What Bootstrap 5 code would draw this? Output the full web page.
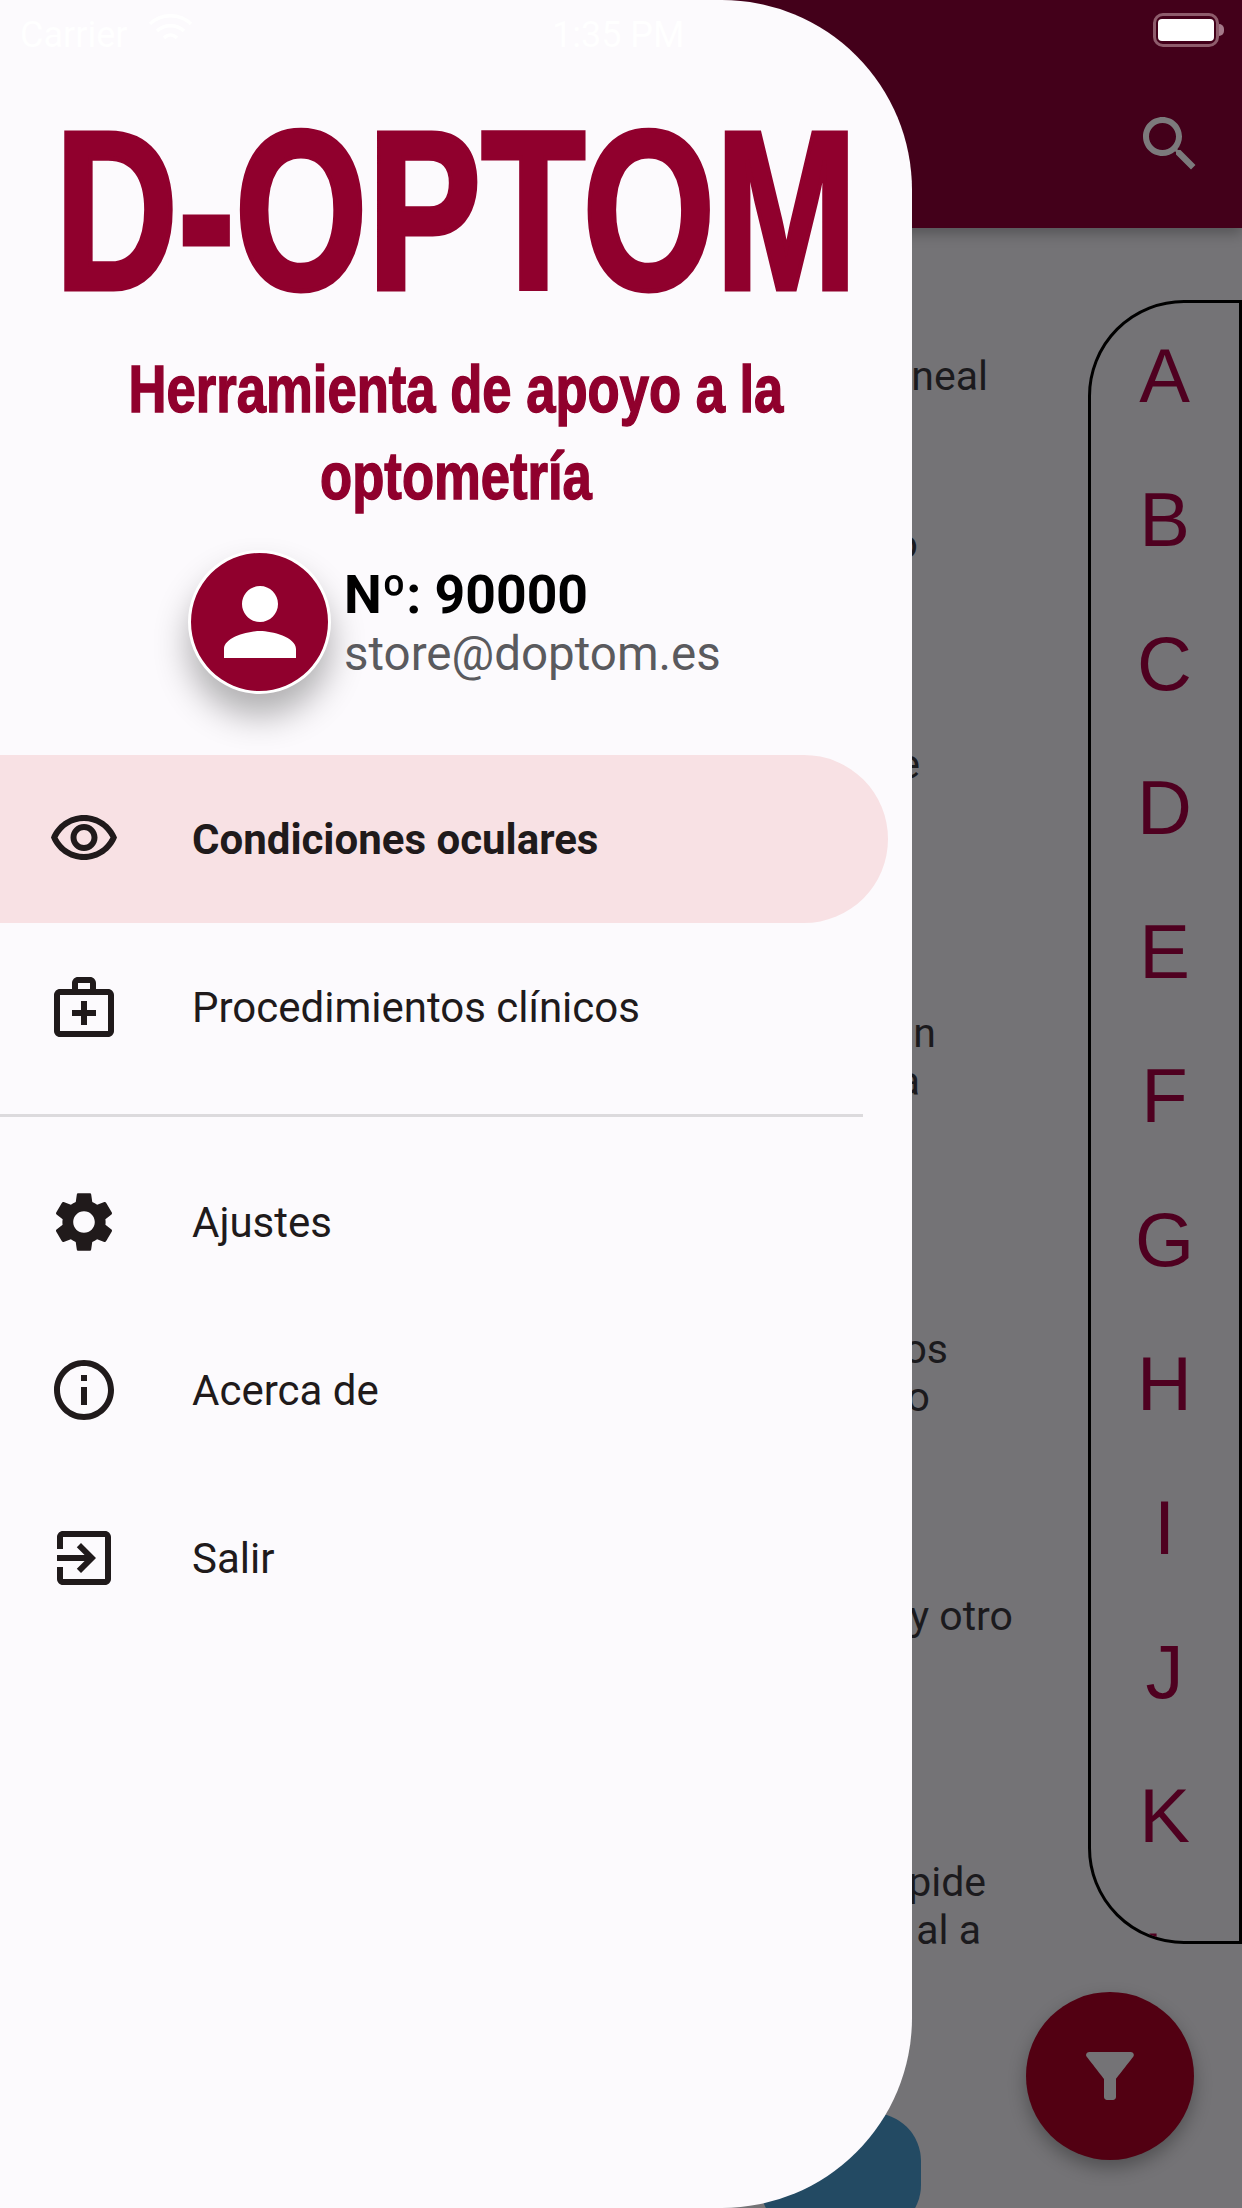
<!DOCTYPE html>
<html lang="es">
<head>
<meta charset="utf-8">
<title>D-OPTOM</title>
<link rel="stylesheet" href="https://cdn.jsdelivr.net/npm/bootstrap@5.3.0/dist/css/bootstrap.min.css">
<style>
html,body{margin:0;background:#747376}
.stage{position:relative;width:1242px;height:2208px;overflow:hidden;background:#747376;font-family:Roboto,"Liberation Sans",sans-serif}
.topbar{height:228px;background:#43001a;box-shadow:0 6px 12px rgba(0,0,0,.25);padding:108px 36px 0 0}
.topbar svg{width:72px;height:72px;fill:#7c7a7c}
.battery{position:absolute;top:13px;right:23px;width:66px;height:34px;border:3px solid #8e5c6c;border-radius:10px;padding:3px 2px}
.battery i{display:block;height:100%;background:#fff;border-radius:4px}
.battery::after{content:"";position:absolute;left:63px;top:8px;width:5px;height:12px;background:#a5798a;border-radius:0 6px 6px 0}
.frags{position:absolute;left:0;top:0;width:1088px;color:#1b1a1d;font-size:41px;line-height:48px;text-align:right}
.frags div{height:48px}
.f1{margin-top:352px;width:988px}.f2{margin-top:120px;width:918px}.f3{margin-top:172px;width:920px}
.f4{margin-top:221px;width:936px}.f5{width:920px}.f6{margin-top:220px;width:948px}.f7{width:930px}
.f8{margin-top:171px;width:1013px}.f9{margin-top:218px;width:986px}.f10{width:981px}
.indexbox{position:absolute;left:1088px;top:300px;width:154px;height:1644px;border:3px solid #000;border-radius:96px 0 0 96px;overflow:hidden;padding-top:1px;color:#4f0020;font-family:"Liberation Sans",sans-serif;font-size:76px;line-height:144px;text-align:center}
.indexbox div{height:144px;width:147px}
.tealtab{position:absolute;left:760px;top:2113px;width:161px;height:120px;background:#234a63;border-radius:48px}
.fabtn{position:absolute;left:1026px;top:1992px;width:168px;height:168px;border-radius:50%;background:#520012;box-shadow:0 8px 18px rgba(0,0,0,.3)}
.fabtn svg{width:72px;height:72px;fill:#747376}
.drawer{position:absolute;left:0;top:0;width:912px;height:2208px;background:#fcfafd;border-radius:0 190px 190px 0;z-index:2}
.stbar{position:relative;height:60px;color:#fff;font-size:36px}
.carrier{position:absolute;left:20px;top:8px}
.wifi{position:absolute;left:148px;top:13px;width:45px;height:31px;fill:none;stroke:#fff;stroke-width:3.500px}
.clock{position:absolute;left:552px;top:8px}
.logo{width:1068px;height:210px;margin:46px 0 0 -78px;color:#90002d;font-family:"Liberation Sans",sans-serif;font-weight:700;font-size:226px;line-height:210px;text-align:center;white-space:nowrap;-webkit-text-stroke:5px #90002d;transform:scaleX(.755)}
.tagline{width:1162px;margin:29px 0 0 -125px;color:#90002d;font-family:"Liberation Sans",sans-serif;font-weight:700;font-size:67px;line-height:87px;text-align:center;white-space:nowrap;-webkit-text-stroke:1.500px #90002d;transform:scaleX(.785)}
.userline{margin-top:31px;margin-left:188px;height:144px}
.avatar{width:143px;height:144px;border-radius:50%;background:#90002d;border:3px solid #fff;box-shadow:0 22px 34px rgba(0,0,0,.3);flex:none}
.avatar svg{width:108px;height:108px;fill:#fff}
.usertext{margin-left:13px;padding-top:12px}
.unum{color:#000;font-weight:700;font-size:53.500px;line-height:65px}
.umail{color:#5a5a5e;font-size:47.500px;line-height:55px}
.navlist{margin-top:61px}
.navrow{height:168px;color:#201a1b;font-size:42px;padding-left:48px;width:888px}
.navrow svg{width:72px;height:72px;fill:#201a1b;flex:none;margin-right:72px}
.navrow.picked{background:#f8e1e4;border-radius:0 84px 84px 0;font-weight:700}
.hairline{height:3px;background:#dcdadd;width:863px;margin:23px 0 21px}
</style>
</head>
<body>
<div class="stage">
  <div class="topbar d-flex justify-content-end align-items-start">
    <svg viewBox="0 0 24 24"><path d="M15.5 14h-.79l-.28-.27C15.41 12.59 16 11.11 16 9.5 16 5.91 13.09 3 9.5 3S3 5.91 3 9.5 5.91 16 9.5 16c1.61 0 3.09-.59 4.23-1.57l.27.28v.79l5 4.99L20.49 19l-4.99-5zm-6 0C7.01 14 5 11.99 5 9.5S7.01 5 9.5 5 14 7.01 14 9.5 11.99 14 9.5 14z"/></svg>
  </div>
  <div class="battery"><i></i></div>
  <div class="frags">
    <div class="f1">neal</div><div class="f2">o</div><div class="f3">e</div><div class="f4">n</div><div class="f5">a</div><div class="f6">os</div><div class="f7">o</div><div class="f8">y otro</div><div class="f9">pide</div><div class="f10">al a</div>
  </div>
  <div class="indexbox">
    <div>A</div><div>B</div><div>C</div><div>D</div><div>E</div><div>F</div><div>G</div><div>H</div><div>I</div><div>J</div><div>K</div><div>L</div>
  </div>
  <div class="tealtab"></div>
  <div class="fabtn d-flex align-items-center justify-content-center">
    <svg viewBox="0 0 24 24"><path d="M4.25 5.61C6.27 8.2 10 13 10 13v6c0 .55.45 1 1 1h2c.55 0 1-.45 1-1v-6s3.72-4.8 5.74-7.39c.51-.66.04-1.61-.79-1.61H5.04c-.83 0-1.3.95-.79 1.61z"/></svg>
  </div>
  <aside class="drawer">
    <div class="stbar">
      <span class="carrier">Carrier</span>
      <svg class="wifi" viewBox="0 0 45 31"><path d="M2 11C13 0 32 0 43 11"/><path d="M9 18C16 11 29 11 36 18"/><path d="M16 25C20 21 25 21 29 25"/></svg>
      <span class="clock">1:35 PM</span>
    </div>
    <h1 class="logo">D-OPTOM</h1>
    <p class="tagline">Herramienta de apoyo a la<br>optometría</p>
    <div class="userline d-flex align-items-start">
      <div class="avatar d-flex align-items-center justify-content-center">
        <svg viewBox="0 0 24 24"><path d="M12 12c2.210 0 4-1.790 4-4s-1.790-4-4-4-4 1.790-4 4 1.790 4 4 4zm0 2c-2.670 0-8 1.340-8 4v2h16v-2c0-2.660-5.330-4-8-4z"/></svg>
      </div>
      <div class="usertext">
        <div class="unum">Nº: 90000</div>
        <div class="umail">store@doptom.es</div>
      </div>
    </div>
    <nav class="navlist">
      <div class="navrow picked d-flex align-items-center">
        <svg viewBox="0 0 24 24"><path d="M12 6c3.790 0 7.170 2.130 8.820 5.500C19.170 14.870 15.790 17 12 17s-7.170-2.130-8.820-5.500C4.830 8.130 8.210 6 12 6m0-2C7 4 2.730 7.110 1 11.500 2.730 15.890 7 19 12 19s9.270-3.110 11-7.500C21.270 7.110 17 4 12 4zm0 5c1.380 0 2.500 1.120 2.500 2.500S13.380 14 12 14s-2.500-1.120-2.500-2.500S10.620 9 12 9m0-2c-2.480 0-4.500 2.020-4.500 4.500S9.520 16 12 16s4.500-2.020 4.500-4.500S14.480 7 12 7z"/></svg>
        <span>Condiciones oculares</span>
      </div>
      <div class="navrow d-flex align-items-center">
        <svg viewBox="0 0 24 24"><path d="M20 6h-4V4c0-1.100-.9-2-2-2h-4c-1.100 0-2 .9-2 2v2H4c-1.100 0-2 .9-2 2v12c0 1.100.9 2 2 2h16c1.100 0 2-.9 2-2V8c0-1.100-.9-2-2-2zM10 4h4v2h-4V4zm10 16H4V8h16v12z"/><path d="M13 10h-2v3H8v2h3v3h2v-3h3v-2h-3z"/></svg>
        <span>Procedimientos clínicos</span>
      </div>
      <div class="hairline"></div>
      <div class="navrow d-flex align-items-center">
        <svg viewBox="0 0 24 24"><path d="M19.140 12.940c.04-.3.06-.61.06-.94 0-.32-.02-.64-.07-.94l2.030-1.580c.18-.14.23-.41.12-.61l-1.920-3.320c-.12-.22-.37-.29-.59-.22l-2.390.96c-.5-.38-1.030-.7-1.620-.94l-.36-2.540c-.04-.24-.24-.41-.48-.41h-3.840c-.24 0-.43.17-.47.41l-.36 2.540c-.59.24-1.130.57-1.620.94l-2.390-.96c-.22-.08-.47 0-.59.22L2.740 8.870c-.12.21-.08.47.12.61l2.030 1.580c-.05.3-.09.63-.09.94s.02.64.07.94l-2.030 1.580c-.18.14-.23.41-.12.61l1.920 3.320c.12.22.37.29.59.22l2.390-.96c.5.38 1.030.7 1.620.94l.36 2.540c.05.24.24.41.48.41h3.840c.24 0 .44-.17.47-.41l.36-2.540c.59-.24 1.130-.56 1.620-.94l2.390.96c.22.08.47 0 .59-.22l1.920-3.320c.12-.22.07-.47-.12-.61l-2.010-1.580zM12 15.600c-1.980 0-3.600-1.620-3.600-3.600s1.620-3.600 3.600-3.600 3.600 1.620 3.600 3.600-1.620 3.600-3.600 3.600z"/></svg>
        <span>Ajustes</span>
      </div>
      <div class="navrow d-flex align-items-center">
        <svg viewBox="0 0 24 24"><path d="M11 7h2v2h-2zm0 4h2v6h-2zm1-9C6.480 2 2 6.480 2 12s4.480 10 10 10 10-4.480 10-10S17.520 2 12 2zm0 18c-4.410 0-8-3.590-8-8s3.590-8 8-8 8 3.590 8 8-3.590 8-8 8z"/></svg>
        <span>Acerca de</span>
      </div>
      <div class="navrow d-flex align-items-center">
        <svg viewBox="0 0 24 24"><path d="M3 9V5c0-1.100.9-2 2-2h14c1.100 0 2 .9 2 2v14c0 1.100-.9 2-2 2H5c-1.100 0-2-.9-2-2v-4h2v4h14V5H5v4H3z"/><path d="M11 7 9.600 8.400 12.200 11H3v2h9.200l-2.600 2.600L11 17l5-5z"/></svg>
        <span>Salir</span>
      </div>
    </nav>
  </aside>
</div>
<script src="https://cdn.jsdelivr.net/npm/bootstrap@5.3.0/dist/js/bootstrap.bundle.min.js"></script>
</body>
</html>
